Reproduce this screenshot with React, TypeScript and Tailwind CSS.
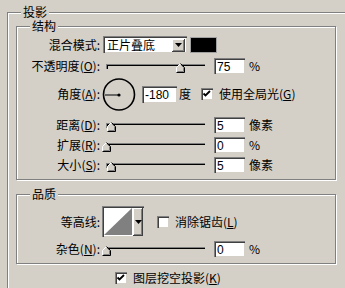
import type { ReactNode } from "react";

const face = "bg-[#d4d0c8]";
const sunken =
  "border-t border-l border-[#808080] border-r-white border-b-white shadow-[inset_1px_1px_0_#404040,inset_-1px_-1px_0_#d4d0c8]";
const raised = "shadow-[inset_-1px_-1px_0_#404040,inset_1px_1px_0_#fff,inset_-2px_-2px_0_#808080]";

function Group({ title, className = "", children }: { title: string; className?: string; children: ReactNode }) {
  return (
    <div className={`relative border border-[#808080] shadow-[inset_1px_1px_0_#fff,1px_1px_0_#fff] ${className}`}>
      <span className={`absolute top-[-7px] left-[13px] ${face} px-[2px] leading-[12px]`}>{title}</span>
      {children}
    </div>
  );
}

function Key({ k }: { k: string }) {
  return (
    <>
      (<span className="underline underline-offset-1">{k}</span>)
    </>
  );
}

function Label({ children }: { children: ReactNode }) {
  return <div className="w-[83px] shrink-0 text-right leading-[14px]">{children}</div>;
}

function Field({ value, w = "w-[31px]", h = "h-[16px]" }: { value: string; w?: string; h?: string }) {
  return (
    <div
      className={`${w} ${h} ${sunken} flex items-center bg-white pl-[2px] font-['Liberation_Sans',sans-serif] text-[12px] leading-none`}
    >
      {value}
    </div>
  );
}

function Slider({ at }: { at: number }) {
  return (
    <div className="relative ml-[2px] flex h-[16px] w-[107px] items-center px-[4px]">
      <div className="h-[5px] w-full border-t border-l border-[#808080] border-r-white border-b-white shadow-[inset_1px_1px_0_#000]" />
      <svg className="absolute top-[5px]" style={{ left: at }} width="9" height="10" viewBox="0 0 9 10">
        <polygon points="0.5,4.5 4.5,0.5 8.5,4.5 8.5,9.5 0.5,9.5" fill="#d4d0c8" />
        <polyline points="0.5,9.5 0.5,4.5 4.5,0.5" fill="none" stroke="#fff" />
        <polyline points="4.5,0.5 8.5,4.5 8.5,9.5 0.5,9.5" fill="none" stroke="#000" />
        <polyline points="5,2 7.5,4.5 7.5,8.5 1.5,8.5" fill="none" stroke="#808080" />
      </svg>
    </div>
  );
}

function Arrow() {
  return (
    <svg width="7" height="4" viewBox="0 0 7 4">
      <polygon points="0,0 7,0 3.5,4" fill="#000" />
    </svg>
  );
}

function Check({ on }: { on: boolean }) {
  return (
    <div className={`h-[12px] w-[12px] shrink-0 ${sunken} bg-white`}>
      {on && (
        <svg width="10" height="10" viewBox="0 0 10 10">
          <polyline points="1.5,4.5 3.5,6.5 8,2" fill="none" stroke="#000" strokeWidth="1.8" />
        </svg>
      )}
    </div>
  );
}

function Row({ label, at, value, unit, className = "mt-[4px]" }: { label: ReactNode; at: number; value: string; unit: string; className?: string }) {
  return (
    <div className={`flex h-[16px] items-center ${className}`}>
      <Label>{label}</Label>
      <Slider at={at} />
      <div className="ml-[5px]">
        <Field value={value} />
      </div>
      <span className="ml-[4px] leading-[14px]">{unit}</span>
    </div>
  );
}

export default function App() {
  return (
    <div
      className={`h-[288px] w-[345px] overflow-hidden ${face} pt-[12px] pl-[7px] font-['Noto_Sans_CJK_SC',sans-serif] text-[12px] text-black`}
    >
      <Group title="投影" className="h-[400px] w-[400px] pt-[13px] pl-[8px]">
        <Group title="结构" className="w-[320px] pt-[9px] pb-[6px]">
          <div className="flex h-[17px] items-center">
            <Label>混合模式:</Label>
            <div className={`ml-[3px] flex h-[17px] w-[84px] items-center ${sunken} bg-white pl-[3px]`}>
              <span className="flex-1 leading-[14px]">正片叠底</span>
              <div className={`mr-[2px] flex h-[13px] w-[13px] items-center justify-center ${face} ${raised}`}>
                <Arrow />
              </div>
            </div>
            <div className="ml-[3px] h-[16px] w-[27px] border border-[#a0a0a0] bg-black" />
          </div>

          <Row className="mt-[5px]" label={<>不透明度<Key k="O" />:</>} at={74} value="75" unit="%" />

          <div className="mt-[4px] flex h-[32px] items-center">
            <Label>
              角度<Key k="A" />:
            </Label>
            <svg className="ml-[2px]" width="34" height="33" viewBox="0 0 34 33">
              <circle cx="17" cy="16.5" r="15.5" fill="none" stroke="#000" strokeWidth="1.6" />
              <line x1="3" y1="17" x2="17" y2="17" stroke="#000" strokeWidth="1" />
              <circle cx="17" cy="17" r="1.6" fill="#000" />
            </svg>
            <div className="ml-[6px]">
              <Field value="-180" w="w-[35px]" h="h-[17px]" />
            </div>
            <span className="ml-[2px] leading-[14px]">度</span>
            <div className="ml-[10px]">
              <Check on />
            </div>
            <span className="ml-[6px] leading-[14px]">
              使用全局光<Key k="G" />
            </span>
          </div>

          <Row className="mt-[7px]" label={<>距离<Key k="D" />:</>} at={5} value="5" unit="像素" />
          <Row label={<>扩展<Key k="R" />:</>} at={0} value="0" unit="%" />
          <Row label={<>大小<Key k="S" />:</>} at={5} value="5" unit="像素" />
        </Group>

        <Group title="品质" className="mt-[14px] w-[320px] pt-[11px] pb-[6px]">
          <div className="flex h-[31px] items-center">
            <Label>等高线:</Label>
            <div className={`ml-[2px] flex h-[31px] w-[42px] ${sunken} bg-white`}>
              <svg className="mt-[1px] ml-[1px]" width="28" height="27" viewBox="0 0 28 27">
                <polygon points="0,27 28,0 28,27" fill="#808080" />
              </svg>
              <div className={`mt-[1px] ml-auto mr-[1px] mb-[1px] flex w-[10px] items-center justify-center ${face} ${raised}`}>
                <Arrow />
              </div>
            </div>
            <div className="ml-[13px]">
              <Check on={false} />
            </div>
            <span className="ml-[6px] leading-[14px]">
              消除锯齿<Key k="L" />
            </span>
          </div>
          <Row label={<>杂色<Key k="N" />:</>} at={0} value="0" unit="%" />
        </Group>

        <div className="mt-[7px] ml-[99px] flex h-[13px] items-center">
          <Check on />
          <span className="ml-[6px] leading-[14px]">
            图层挖空投影<Key k="K" />
          </span>
        </div>
      </Group>
    </div>
  );
}
